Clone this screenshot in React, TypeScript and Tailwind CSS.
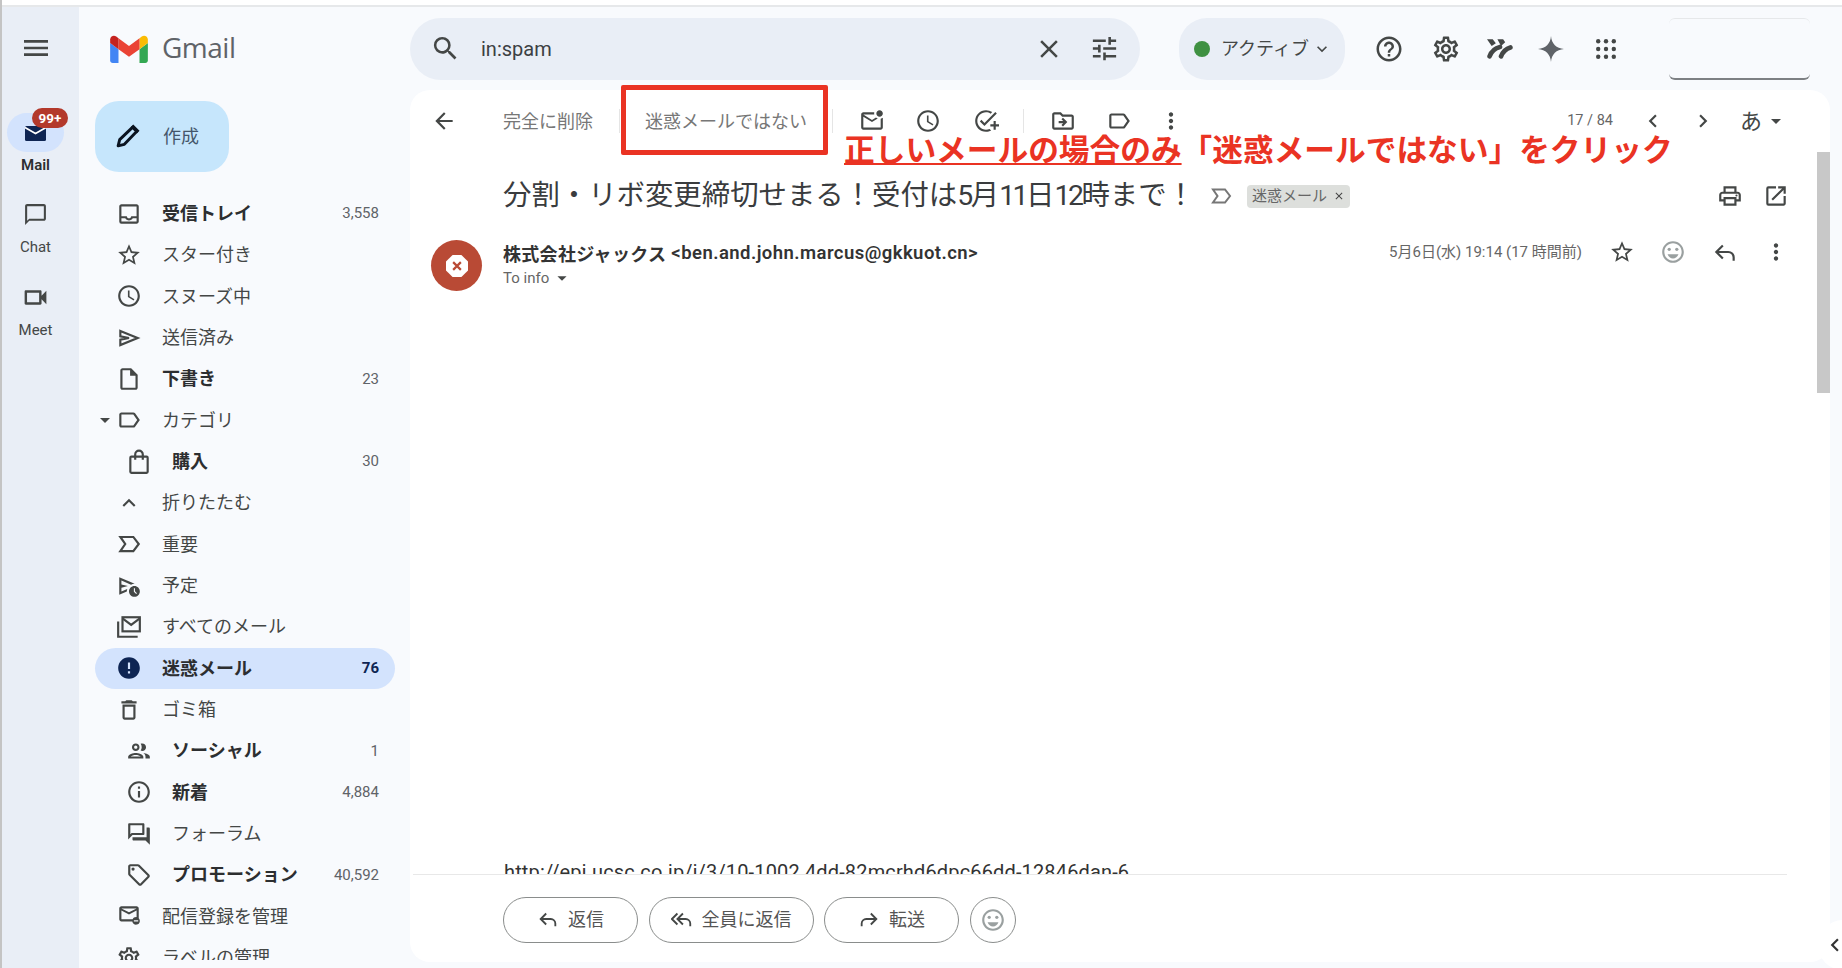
import type { ReactNode } from 'react';
import {
  MdMenu, MdSearch, MdClose, MdTune, MdHelpOutline, MdOutlineSettings, MdOutlineInbox, MdStarBorder,
  MdAccessTime, MdOutlineInsertDriveFile, MdOutlineLabel, MdExpandLess,
  MdOutlineScheduleSend, MdError, MdOutlineDelete, MdOutlinePeople, MdInfoOutline,
  MdOutlineForum, MdOutlineLocalOffer, MdOutlineUnsubscribe, MdArrowBack, MdOutlineMarkEmailUnread,
  MdOutlineAddTask, MdOutlineDriveFileMove, MdMoreVert, MdChevronLeft, MdChevronRight, MdArrowDropDown,
  MdOutlinePrint, MdOpenInNew, MdOutlineEmojiEmotions, MdOutlineChatBubbleOutline,
  MdOutlineVideocam, MdKeyboardArrowDown,
} from 'react-icons/md';

function GmailLogo() {
  return (
    <svg viewBox="0 0 52 40" className="w-[38px] h-[29px]">
      <path fill="#4285f4" d="M3.5 40h8V21L0 12.5V36.5C0 38.4 1.6 40 3.5 40z" />
      <path fill="#34a853" d="M40.5 40h8c1.9 0 3.5-1.6 3.5-3.5v-24L40.5 21z" />
      <path fill="#fbbc04" d="M40.5 6v15L52 12.5V7.5c0-4.3-4.9-6.8-8.4-4.2z" />
      <path fill="#ea4335" d="M11.5 21V6L26 16.5 40.5 6v15L26 31.5z" />
      <path fill="#c5221f" d="M0 7.5v5L11.5 21V6L8.4 3.3C4.9.7 0 3.2 0 7.5z" />
    </svg>
  );
}

function AllMailIcon({ className }: { className?: string }) {
  return (
    <svg viewBox="0 0 24 24" fill="none" stroke="currentColor" strokeWidth="2" className={className}>
      <rect x="6" y="3" width="16" height="13" />
      <path d="M6 4l8 6 8-6" />
      <path d="M2 7v14h18" />
    </svg>
  );
}

function ImportantIcon({ className }: { className?: string }) {
  return (
    <svg viewBox="0 0 24 24" fill="none" stroke="currentColor" strokeWidth="2" className={className}>
      <path d="M4 5.500h12l5 6.500-5 6.500H4l4.500-6.500z" />
    </svg>
  );
}

function SendIcon({ className }: { className?: string }) {
  return (
    <svg viewBox="0 0 24 24" fill="none" stroke="currentColor" strokeWidth="2" className={className}>
      <path d="M4 5.500L20 12 4 18.500v-5l8-1.500-8-1.500z" />
    </svg>
  );
}

function BagIcon({ className }: { className?: string }) {
  return (
    <svg viewBox="0 0 24 24" fill="none" stroke="currentColor" strokeWidth="2" className={className}>
      <rect x="4" y="7" width="16" height="15" rx="1" />
      <path d="M8.500 10V5a3.500 3.500 0 0 1 7 0v5" />
    </svg>
  );
}

function PencilIcon({ className }: { className?: string }) {
  return (
    <svg viewBox="0 0 24 24" fill="none" stroke="currentColor" strokeWidth="2.800" strokeLinejoin="round" className={className}>
      <path d="M3 21l1.500-6L17 3l4 4L9 19.500z" />
      <path fill="currentColor" stroke="none" d="M15 3l2.500-2.500 6 6L21 9z" />
    </svg>
  );
}

function ReplyIcon({ className }: { className?: string }) {
  return (
    <svg viewBox="0 0 24 24" fill="none" stroke="currentColor" strokeWidth="2" className={className}>
      <path d="M10 6l-6 6 6 6" />
      <path d="M4 12h11a5 5 0 0 1 5 5v3" />
    </svg>
  );
}

function ReplyAllIcon({ className }: { className?: string }) {
  return (
    <svg viewBox="0 0 24 24" fill="none" stroke="currentColor" strokeWidth="2" className={className}>
      <path d="M7 6l-6 6 6 6" />
      <path d="M13 6l-6 6 6 6" />
      <path d="M7 12h9a5 5 0 0 1 5 5v3" />
    </svg>
  );
}

function AppsIcon({ className }: { className?: string }) {
  return (
    <svg viewBox="0 0 20 20" fill="currentColor" className={className}>
      {[2.2, 10, 17.8].flatMap(y =>
        [2.2, 10, 17.8].map(x => <circle key={`${x}-${y}`} cx={x} cy={y} r="2.200" />)
      )}
    </svg>
  );
}

type Row = { icon: ReactNode; label: string; count?: string; bold?: boolean; sub?: boolean; active?: boolean; caret?: boolean };

const ic = 'size-[26px] shrink-0';

const rows: Row[] = [
  { icon: <MdOutlineInbox className={ic} />, label: '受信トレイ', count: '3,558', bold: true },
  { icon: <MdStarBorder className={ic} />, label: 'スター付き' },
  { icon: <MdAccessTime className={ic} />, label: 'スヌーズ中' },
  { icon: <SendIcon className={ic} />, label: '送信済み' },
  { icon: <MdOutlineInsertDriveFile className={ic} />, label: '下書き', count: '23', bold: true },
  { icon: <MdOutlineLabel className={ic} />, label: 'カテゴリ', caret: true },
  { icon: <BagIcon className={ic} />, label: '購入', count: '30', bold: true, sub: true },
  { icon: <MdExpandLess className={ic} />, label: '折りたたむ' },
  { icon: <ImportantIcon className={ic} />, label: '重要' },
  { icon: <MdOutlineScheduleSend className={ic} />, label: '予定' },
  { icon: <AllMailIcon className={ic} />, label: 'すべてのメール' },
  { icon: <MdError className={ic} />, label: '迷惑メール', count: '76', bold: true, active: true },
  { icon: <MdOutlineDelete className={ic} />, label: 'ゴミ箱' },
  { icon: <MdOutlinePeople className={ic} />, label: 'ソーシャル', count: '1', bold: true, sub: true },
  { icon: <MdInfoOutline className={ic} />, label: '新着', count: '4,884', bold: true, sub: true },
  { icon: <MdOutlineForum className={ic} />, label: 'フォーラム', sub: true },
  { icon: <MdOutlineLocalOffer className={ic} />, label: 'プロモーション', count: '40,592', bold: true, sub: true },
  { icon: <MdOutlineUnsubscribe className={ic} />, label: '配信登録を管理' },
  { icon: <MdOutlineSettings className={ic} />, label: 'ラベルの管理' },
];

function SideRow({ row }: { row: Row }) {
  return (
    <div
      className={`relative ml-[16px] w-[300px] h-[41.33px] shrink-0 flex items-center pr-[16px] rounded-full ${
        row.sub ? 'pl-[31px]' : 'pl-[21px]'
      } ${row.active ? 'bg-[#d3e3fd] text-[#0e2553]' : 'text-[#444746]'}`}
    >
      {row.caret && <MdArrowDropDown className="absolute left-[-2px] size-[24px]" />}
      {row.icon}
      <span className={`ml-[20px] text-[18px] whitespace-nowrap ${row.bold ? 'font-bold text-[#2c2e30]' : ''} ${row.active ? 'text-[#0e2553]' : ''}`}>{row.label}</span>
      {row.count && (
        <span className={`ml-auto text-[15px] ${row.active ? 'font-bold text-[#0e2553]' : 'text-[#5f6368]'}`}>{row.count}</span>
      )}
    </div>
  );
}

function RailItem({ icon, label }: { icon: ReactNode; label: string }) {
  return (
    <div className="flex flex-col items-center text-[#444746]">
      <div className="h-[39px] flex items-center justify-center">{icon}</div>
      <span className="mt-[3px] text-[15px] leading-[20px]">{label}</span>
    </div>
  );
}

function ReplyButton({ icon, label, width }: { icon: ReactNode; label: string; width: string }) {
  return (
    <button className={`h-[46px] ${width} flex items-center justify-center gap-[9px] pb-[2px] rounded-full border border-[#8a8d8c] text-[18px] text-[#555]`}>
      {icon}
      {label}
    </button>
  );
}

export default function App() {
  const tb = 'size-[26px] shrink-0 text-[#444746]';
  return (
    <div className="relative w-[1842px] h-[968px] overflow-hidden flex flex-col bg-[#f8fafd] border-l-2 border-[#c4c4c4] font-['Roboto','Noto_Sans_CJK_JP',sans-serif]">
      <div className="h-[7px] shrink-0 bg-white border-b-2 border-[#e6e8ea]" />
      <div className="flex-1 flex min-h-0">
        {/* rail */}
        <div className="w-[77px] shrink-0 bg-[#e9eef6] flex flex-col items-center pr-[10px]">
          <MdMenu className="mt-[25px] size-[32px] text-[#444746]" />
          <div className="relative mt-[49px] w-[57px] h-[39px] shrink-0 rounded-[20px] bg-[#d3e3fd] flex items-center justify-center">
            <svg viewBox="0 0 21 15" className="w-[21px] h-[15px] mt-[2px]">
              <rect width="21" height="15" rx="1.5" fill="#0e2553" />
              <path d="M0 1.500l10.500 6 10.500-6" fill="none" stroke="#fff" strokeWidth="1.600" />
            </svg>
            <span className="absolute left-[25px] top-[-5px] w-[36px] h-[20px] rounded-full bg-[#b3392b] text-white text-[13.5px] font-bold leading-[20px] text-center">99+</span>
          </div>
          <span className="mt-[3px] text-[15px] leading-[20px] font-semibold text-[#2c2e30]">Mail</span>
          <div className="mt-[19.5px] flex flex-col gap-[21.5px]">
            <RailItem icon={<MdOutlineChatBubbleOutline className="size-[25px]" />} label="Chat" />
            <RailItem icon={<MdOutlineVideocam className="size-[29px]" />} label="Meet" />
          </div>
        </div>

        <div className="flex-1 min-w-0 flex flex-col">
          {/* header */}
          <div className="h-[83px] shrink-0 flex items-center">
            <div className="w-[331px] shrink-0 flex items-center pl-[31px]">
              <GmailLogo />
              <span className="ml-[14px] mb-[3px] text-[28px] text-[#5f6368] font-['Open_Sans',sans-serif] tracking-[-0.5px]">Gmail</span>
            </div>
            <div className="w-[730px] h-[62px] rounded-full bg-[#e9eef6] flex items-center pl-[20px] pr-[20px] text-[#444746]">
              <MdSearch className="size-[31px]" />
              <span className="ml-[20px] flex-1 text-[20px] text-[#3c4043]">in:spam</span>
              <MdClose className="size-[30px]" />
              <MdTune className="ml-[25px] size-[31px]" />
            </div>
            <div className="ml-[39px] w-[166px] h-[62px] rounded-[28px] bg-[#e9eef6] flex items-center pl-[15px] text-[#444746]">
              <span className="size-[16px] rounded-full bg-[#3f9142]" />
              <span className="ml-[11px] text-[18px] whitespace-nowrap">アクティブ</span>
              <MdKeyboardArrowDown className="ml-[3px] size-[20px]" />
            </div>
            <MdHelpOutline className="ml-[29px] size-[30px] text-[#444746]" />
            <MdOutlineSettings className="ml-[27px] size-[30px] text-[#444746]" />
            <svg viewBox="0 0 25 20" className="ml-[26px] w-[26px] h-[21px]">
              <path fill="#444746" d="M0 1h5.500l3 4-4 2.500zM10 1h5.500l2 3-4 3.500z" />
              <path fill="none" stroke="#444746" strokeWidth="4.500" strokeLinecap="round" d="M2.500 17.500C4.500 12 8 9.500 12.500 8.500M13.500 17.500C15.500 12.500 19 10 22.500 9" />
            </svg>
            <svg viewBox="0 0 24 24" className="ml-[25px] size-[26px]">
              <path fill="#5f6368" d="M12 0c.5 7 5 11.500 12 12-7 .5-11.500 5-12 12-.5-7-5-11.500-12-12 7-.5 11.500-5 12-12z" />
            </svg>
            <AppsIcon className="ml-[32px] size-[20px] text-[#444746]" />
            <div className="ml-[53px] w-[141px] h-[62px] rounded-[6px] border-t border-t-[#e6e8ea] border-b-2 border-b-[#7d8083]" />
          </div>

          <div className="flex-1 min-h-0 flex">
            {/* sidebar */}
            <div className="w-[331px] shrink-0 mb-[8px] overflow-hidden flex flex-col">
              <div className="ml-[16px] mt-[11px] w-[134px] h-[71px] shrink-0 rounded-[24px] bg-[#c6e6fc] flex items-center pl-[20px] text-[#44566a]">
                <PencilIcon className="size-[25px] text-[#0b1420]" />
                <span className="ml-[23px] text-[18px]">作成</span>
              </div>
              <div className="mt-[21px] flex flex-col">
                {rows.map(r => (
                  <SideRow key={r.label} row={r} />
                ))}
              </div>
            </div>

            {/* mail card */}
            <div className="relative w-[1420px] mb-[6px] rounded-[20px] bg-white flex flex-col">
              <div className="h-[62px] shrink-0 flex items-center pl-[21px] pr-[42px] text-[18px] text-[#777]">
                <MdArrowBack className={tb} />
                <span className="ml-[46px] w-[91px] whitespace-nowrap">完全に削除</span>
                <span className="ml-[25px] w-px h-[24px] bg-[#e5e5e5]" />
                <span className="ml-[25px] w-[162px] whitespace-nowrap">迷惑メールではない</span>
                <span className="ml-[25px] w-px h-[24px] bg-[#e5e5e5]" />
                <MdOutlineMarkEmailUnread className={`ml-[26px] ${tb}`} />
                <MdAccessTime className={`ml-[30px] ${tb}`} />
                <MdOutlineAddTask className={`ml-[32px] ${tb}`} />
                <span className="ml-[24px] w-px h-[24px] bg-[#e5e5e5]" />
                <MdOutlineDriveFileMove className={`ml-[26px] ${tb}`} />
                <MdOutlineLabel className={`ml-[30px] ${tb}`} />
                <MdMoreVert className={`ml-[26px] ${tb}`} />
                <span className="ml-auto text-[14.5px] text-[#666]">17 / 84</span>
                <MdChevronLeft className={`ml-[27px] ${tb}`} />
                <MdChevronRight className={`ml-[24px] ${tb}`} />
                <span className="ml-[24px] text-[22px] text-[#444746]">あ</span>
                <MdArrowDropDown className="ml-[2px] size-[24px] text-[#444746]" />
              </div>

              <div className="h-[86px] shrink-0 flex items-center pl-[93px] pr-[41px] pt-[2px]">
                <span className="w-[706px] text-[28.4px] text-[#3a3c3e] whitespace-nowrap">
                  分割・リボ変更締切せまる！受付は<span className="tracking-[-2.5px]">5</span>月<span className="tracking-[-2.5px]">11</span>日<span className="tracking-[-2.5px]">12</span>時まで！
                </span>
                <ImportantIcon className="size-[24px] text-[#777]" />
                <span className="ml-[14px] w-[103px] h-[23px] rounded-[4px] bg-[#dddfdc] flex items-center justify-between px-[5px] text-[15px] text-[#666]">
                  迷惑メール
                  <MdClose className="size-[12px] text-[#444]" />
                </span>
                <MdOutlinePrint className={`ml-auto ${tb}`} />
                <MdOpenInNew className={`ml-[20px] ${tb}`} />
              </div>

              <div className="shrink-0 flex items-start pl-[21px] pr-[41px] pt-[2px]">
                <div className="size-[51px] rounded-full bg-[#b94a35] flex items-center justify-center">
                  <svg viewBox="0 0 20 20" className="size-[22px]">
                    <polygon fill="#fff" points="6,0 14,0 20,6 20,14 14,20 6,20 0,14 0,6" />
                    <path d="M6.500 6.500l7 7m0-7l-7 7" stroke="#b94a35" strokeWidth="2" />
                  </svg>
                </div>
                <div className="ml-[21px] flex-1">
                  <div className="h-[26px] pt-[2px] flex items-center text-[18px] tracking-[0.3px] font-semibold text-[#333] whitespace-nowrap">
                    株式会社ジャックス
                    <span className="ml-[5px] text-[18.5px] tracking-[0.45px]">&lt;ben.and.john.marcus@gkkuot.cn&gt;</span>
                  </div>
                  <div className="h-[24px] flex items-center text-[15px] text-[#666]">
                    To info
                    <MdArrowDropDown className="ml-[2px] size-[22px] text-[#444746]" />
                  </div>
                </div>
                <div className="h-[24px] flex items-center">
                  <span className="text-[15px] text-[#666] whitespace-nowrap">5月6日(水) 19:14 (17 時間前)</span>
                  <MdStarBorder className={`ml-[27px] ${tb}`} />
                  <MdOutlineEmojiEmotions className="ml-[25px] size-[26px] text-[#9aa0a0]" />
                  <ReplyIcon className={`ml-[26px] ${tb}`} />
                  <MdMoreVert className={`ml-[25px] ${tb}`} />
                </div>
              </div>

              {/* message body is scrolled almost out of view */}
              <div className="flex-1 min-h-0 overflow-hidden pl-[94px] flex flex-col justify-end">
                <div className="mb-[-10px] text-[20px] leading-[24px] tracking-[0.15px] text-[#333] whitespace-nowrap">http://epj.ucsc.co.jp/j/3/10-1002 4dd-82mcrhd6dpc66dd-12846dan-6</div>
              </div>
              <div className="ml-[3px] mr-[43px] h-px bg-[#e8e8e8]" />
              <div className="h-[87px] shrink-0 flex pt-[22px] pl-[93px] gap-[10.5px]">
                <ReplyButton icon={<ReplyIcon className="size-[22px] text-[#444746]" />} label="返信" width="w-[135px]" />
                <ReplyButton icon={<ReplyAllIcon className="size-[22px] text-[#444746]" />} label="全員に返信" width="w-[165px]" />
                <ReplyButton icon={<ReplyIcon className="size-[22px] text-[#444746] -scale-x-100" />} label="転送" width="w-[135px]" />
                <button className="size-[46px] rounded-full border border-[#8a8d8c] flex items-center justify-center">
                  <MdOutlineEmojiEmotions className="size-[26px] text-[#9aa0a0]" />
                </button>
              </div>

              {/* scrollbar thumb */}
              <div className="absolute right-0 top-[62px] w-[13px] h-[241px] bg-[#c8c8c8]" />

              {/* red annotation over the screenshot */}
              <div className="absolute left-[211px] top-[-5px] w-[207px] h-[70px] border-[5px] border-[#ea3323] rounded-[2px]" />
              <div className="absolute left-[434px] top-[41px] text-[30.7px] leading-[40px] font-bold text-[#ea3323] whitespace-nowrap">
                <span className="underline decoration-2 underline-offset-2">正しいメールの場合のみ</span>「迷惑メールではない」をクリック
              </div>
            </div>
          </div>
        </div>
      </div>

      {/* side panel toggle */}
      <div className="absolute right-[-26px] top-[920px] size-[50px] rounded-full bg-white flex items-center pl-[4px]">
        <MdChevronLeft className="size-[26px] text-[#333]" />
      </div>
    </div>
  );
}
